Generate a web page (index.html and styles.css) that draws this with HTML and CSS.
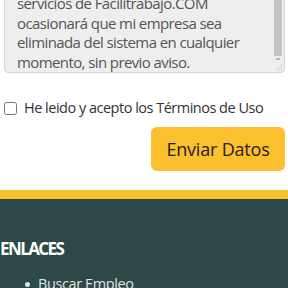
FILE: index.html
```html
<!DOCTYPE html>
<html lang="es">
<head>
<meta charset="utf-8">
<link rel="stylesheet" href="styles.css">
</head>
<body>
<main class="form">
  <div class="terms-box">
    <div class="terms-text">
      <p>El uso indebido de los</p>
      <p>servicios de Facilitrabajo.COM</p>
      <p>ocasionará que mi empresa sea</p>
      <p>eliminada del sistema en cualquier</p>
      <p>momento, sin previo aviso.</p>
    </div>
    <div class="scrollbar"><span class="thumb"></span><span class="arrow"></span><span class="grip"></span></div>
  </div>
  <label class="accept"><input type="checkbox"> He leido y acepto los Términos de Uso</label>
  <div class="actions"><button class="send">Enviar Datos</button></div>
</main>
<footer class="footer">
  <h3 class="footer-title">ENLACES</h3>
  <ul class="links">
    <li>Buscar Empleo</li>
  </ul>
</footer>
</body>
</html>
```
FILE: styles.css
```css
html, body { margin: 0; padding: 0; background: #fff; }
body { font-family: "Open Sans", "Noto Sans", sans-serif; width: 288px; overflow: hidden; }
.form { padding: 0 3px 0 4px; }
.terms-box {
  position: relative;
  margin-top: -29px;
  height: 102px;
  box-sizing: border-box;
  border: 1px solid #d6d6d6;
  border-radius: 4px;
  background: #eeeeee;
  overflow: hidden;
  display: flex;
  flex-direction: column;
  justify-content: flex-end;
  padding: 0 12px 0 12px;
}
.terms-text p { margin: 0; font-size: 15px; letter-spacing: -0.6px; line-height: 19.5px; color: #555; white-space: nowrap; }
.scrollbar { position: absolute; right: 2px; top: 0; bottom: 0; width: 8px; }
.thumb { position: absolute; left: 0; right: 0; top: 0; height: 84px; background: #c4c4c4; }
.arrow { position: absolute; left: 2px; top: 86px; width: 4px; height: 2px; background: #b5b5b5; }
.grip { position: absolute; right: 0; bottom: 1px; width: 7px; height: 7px; background: linear-gradient(135deg, transparent 50%, #cfcfcf 50%, #cfcfcf 60%, transparent 60%, transparent 75%, #cfcfcf 75%, #cfcfcf 85%, transparent 85%); }
.accept { display: flex; align-items: center; gap: 7px; margin-top: 24px; font-size: 14.5px; letter-spacing: -0.5px; color: #333; line-height: 22px; white-space: nowrap; }
.accept input { margin: 0; width: 13px; height: 13px; }
.actions { display: flex; justify-content: flex-end; margin-top: 8px; }
.send {
  font-family: inherit; font-size: 18px; letter-spacing: -0.2px; color: #222;
  background: #fbc02d; border: none; border-radius: 6px;
  width: 134px; height: 44px; padding: 0;
}
.footer { margin-top: 19px; border-top: 9px solid #fbc02d; background: #2c4947; color: #fff; padding: 38px 0 10px; }
.footer-title { margin: 0; font-size: 17px; font-weight: 700; letter-spacing: -1.6px; line-height: 24px; }
.links { list-style: none; margin: 12px 0 0; padding-left: 25px; color: #e2e2e2; font-size: 14.5px; letter-spacing: -0.4px; line-height: 22px; }
.links li { display: flex; align-items: center; gap: 8px; }
.links li::before { content: ""; width: 5px; height: 5px; border-radius: 50%; background: #e2e2e2; }
```
